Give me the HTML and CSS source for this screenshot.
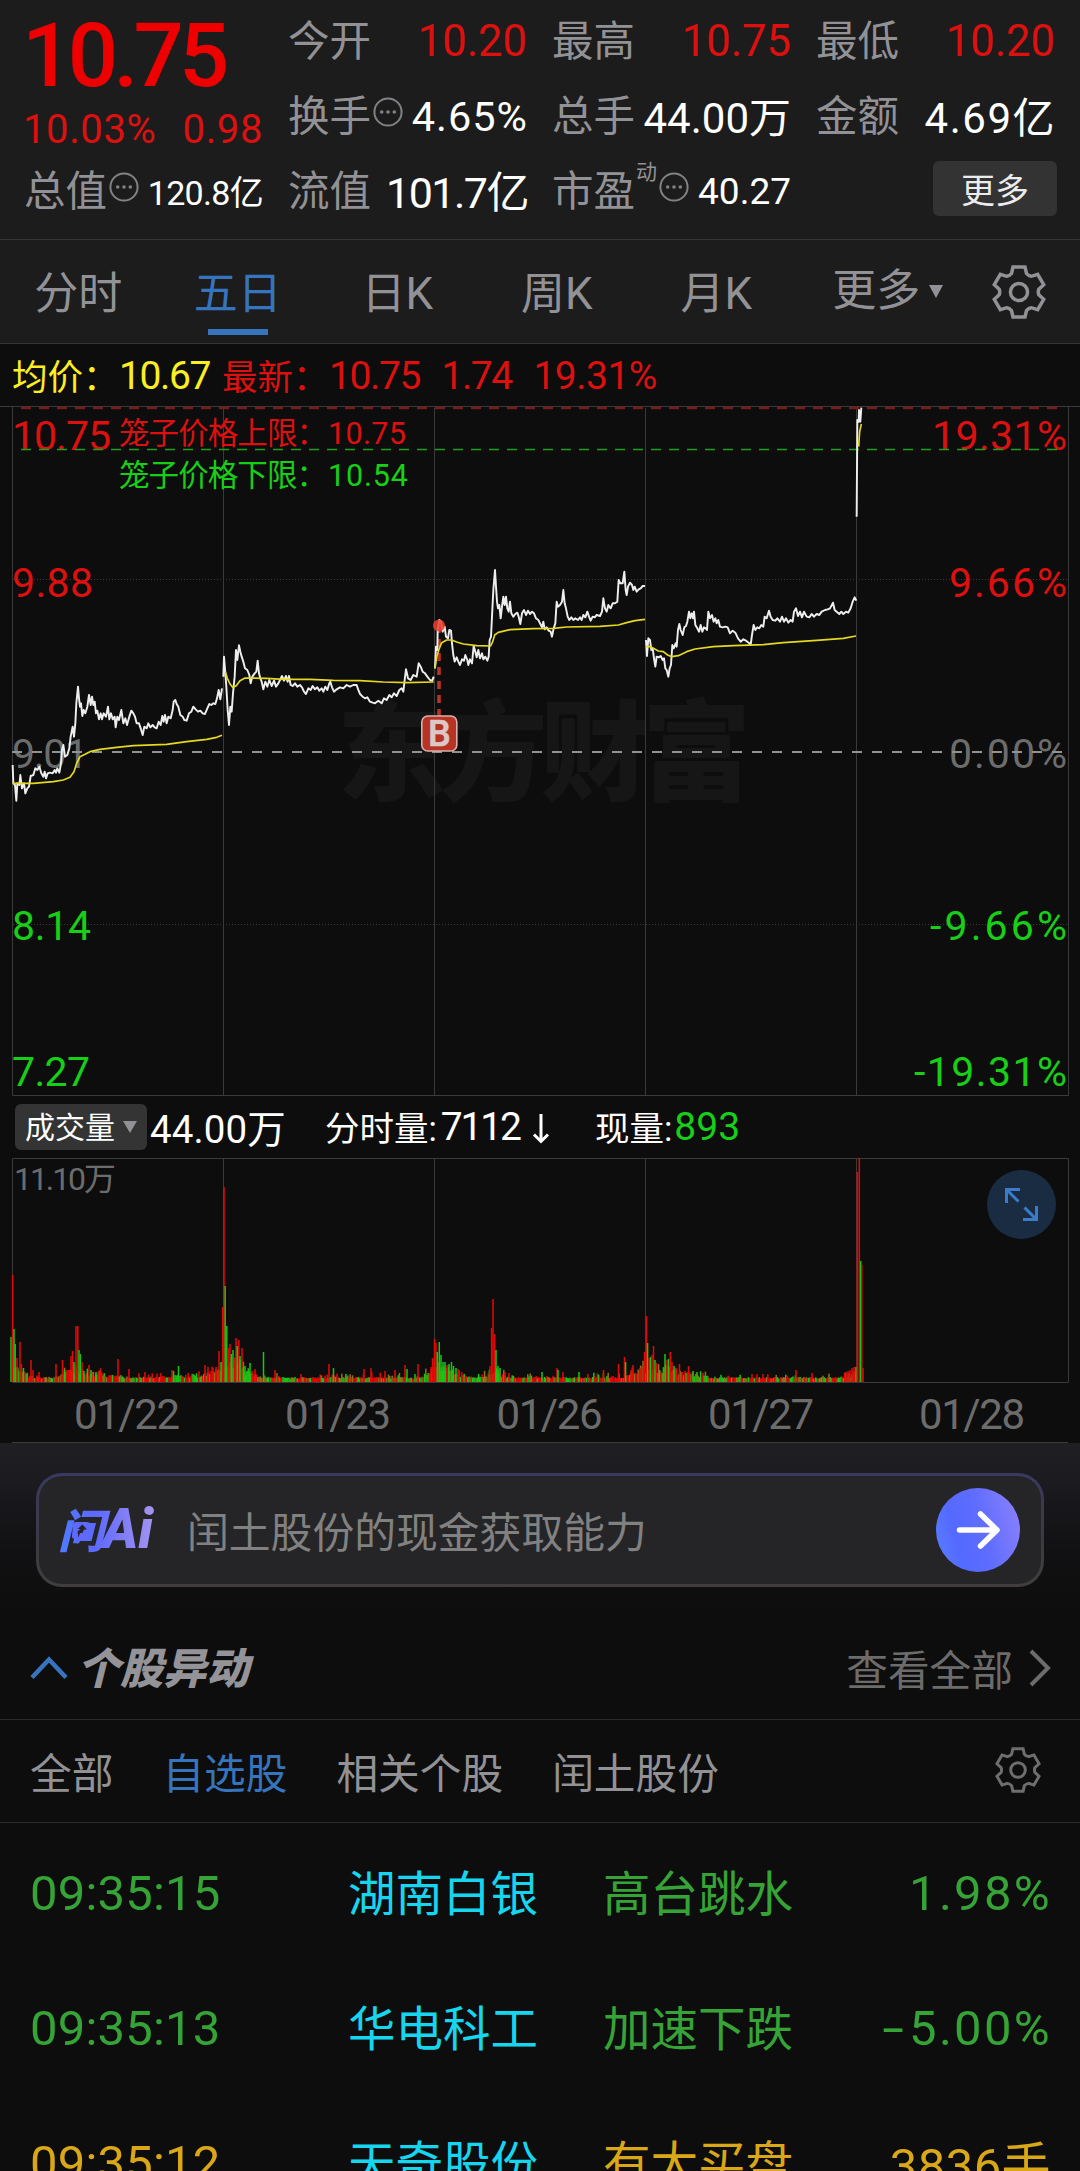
FILE: index.html
```html
<!DOCTYPE html>
<html lang="zh-CN">
<head>
<meta charset="utf-8">
<title>闰土股份</title>
<link rel="stylesheet" href="styles.css">
</head>
<body>
<svg width="0" height="0" class="defs">
  <symbol id="gear" viewBox="-27 -27 54 54">
    <path d="M-7.5-18.5-6-25H6L7.5-18.5Q9.5-16 12.3-15.7L18.7-17.7 24.7-7.3 19.8-2.8Q18.8 0 19.8 2.8L24.7 7.3 18.7 17.7 12.3 15.7Q9.5 16 7.5 18.5L6 25H-6L-7.5 18.5Q-9.5 16-12.3 15.7L-18.7 17.7-24.7 7.3-19.8 2.8Q-18.8 0-19.8-2.8L-24.7-7.3-18.7-17.7-12.3-15.7Q-9.5-16-7.5-18.5Z"/>
    <circle r="8.6"/>
  </symbol>
  <symbol id="dots" viewBox="0 0 30 30">
    <circle cx="15" cy="15" r="13.6" fill="none" stroke="currentColor" stroke-width="2"/>
    <circle cx="8.7" cy="15" r="1.8" fill="currentColor"/><circle cx="15" cy="15" r="1.8" fill="currentColor"/><circle cx="21.3" cy="15" r="1.8" fill="currentColor"/>
  </symbol>
</svg>

<header class="quote">
  <div class="lead">
    <div class="price">10.75</div>
    <div class="change"><span>10.03%</span><span>0.98</span></div>
    <div class="cell"><span class="k">总值</span><svg class="info"><use href="#dots"/></svg><span class="v s35">120.8亿</span></div>
  </div>
  <div class="cell"><span class="k">今开</span><span class="v up">10.20</span></div>
  <div class="cell"><span class="k">最高</span><span class="v up">10.75</span></div>
  <div class="cell"><span class="k">最低</span><span class="v up">10.20</span></div>
  <div class="cell"><span class="k">换手</span><svg class="info"><use href="#dots"/></svg><span class="v s41">4.65%</span></div>
  <div class="cell"><span class="k">总手</span><span class="v s42">44.00万</span></div>
  <div class="cell"><span class="k">金额</span><span class="v s42 wide">4.69亿</span></div>
  <div class="cell"><span class="k">流值</span><span class="v s43">101.7亿</span></div>
  <div class="cell"><span class="k">市盈</span><sup class="dyn">动</sup><svg class="info"><use href="#dots"/></svg><span class="v s37">40.27</span></div>
  <div class="cell end"><button class="more">更多</button></div>
</header>

<nav class="tabs">
  <span>分时</span><span class="on">五日</span><span>日K</span><span>周K</span><span>月K</span><span class="drop">更多<i></i></span>
  <svg class="gear"><use href="#gear"/></svg>
</nav>

<div class="avg"><span class="y">均价：</span><span class="y n">10.67</span><span class="r">最新：</span><span class="r n">10.75</span><span class="r n">1.74</span><span class="r n pc">19.31%</span></div>

<svg class="chart" viewBox="0 406 1080 690">
  <text class="wm" x="337" y="792" textLength="414">东方财富</text>
  <path class="grid" d="M0 406.5H1080M12.5 406V1095.5H1068.5V406M223.5 408V1095M434.5 408V1095M645.5 408V1095M856.5 408V1095"/>
  <path class="dotline" d="M13 579.5H1068M13 924.5H1068"/>
  <g class="big">
    <text class="r" x="12" y="450" textLength="99">10.75</text>
    <text class="r" x="12" y="596.5" textLength="81">9.88</text>
    <text class="g0" x="12" y="768" textLength="76">9.01</text>
    <text class="g" x="12" y="939.5" textLength="79">8.14</text>
    <text class="g" x="12" y="1085.5" textLength="78">7.27</text>
    <text class="r" x="932" y="450" textLength="135">19.31%</text>
    <text class="r" x="949" y="596.5" textLength="118">9.66%</text>
    <text class="g0" x="949" y="768" textLength="118">0.00%</text>
    <text class="g" x="930" y="939.5" textLength="137">-9.66%</text>
    <text class="g" x="914" y="1085.5" textLength="153">-19.31%</text>
  </g>
  <g class="cage">
    <text class="r" x="119" y="443.5" textLength="208">笼子价格上限：</text><text class="r" x="328" y="443.5" textLength="78">10.75</text>
    <text class="g" x="119" y="485.5" textLength="208">笼子价格下限：</text><text class="g" x="328" y="485.5" textLength="80">10.54</text>
  </g>
  <path d="M21 408H1058" stroke="#7a1b1b" stroke-width="2.6" stroke-dasharray="10 8"/>
  <path d="M21 449.5H1058" stroke="#20a020" stroke-width="1.3" stroke-dasharray="10 8"/>
  <path d="M12 752H1063" stroke="#929292" stroke-width="2" stroke-dasharray="10 10"/>
  <path d="M439 625V716" stroke="#b83226" stroke-width="3.6" stroke-dasharray="8 6"/>
  <g class="px" transform="translate(0 340) scale(.33333)">
    <polyline points="38,1275 40,1330 45,1335 49,1382 52,1330 58,1335 61,1305 66,1345 72,1330 76,1360 82,1345 87,1340 92,1308 100,1305 106,1285 112,1290 118,1280 124,1300 130,1310 134,1295 138,1315 143,1300 150,1298 158,1300 164,1290 168,1298 172,1285 178,1298 183,1270 186,1230 190,1215 195,1250 202,1245 208,1225 212,1190 218,1160 222,1190 226,1150 229,1090 234,1040 237,1075 240,1100 243,1090 247,1128 251,1110 256,1120 262,1100 267,1065 272,1095 276,1070 280,1095 284,1085 288,1120 292,1112 297,1138 302,1120 306,1138 311,1120 318,1130 324,1100 328,1138 333,1120 338,1138 344,1130 347,1162 352,1130 357,1140 364,1110 370,1150 376,1135 381,1155 388,1130 394,1112 400,1120 405,1130 410,1150 417,1150 422,1165 428,1185 433,1160 440,1165 445,1150 451,1162 458,1155 464,1162 470,1165 476,1145 482,1155 487,1128 491,1145 495,1125 500,1150 505,1130 512,1135 518,1110 521,1085 526,1080 530,1092 535,1100 541,1125 548,1130 553,1140 560,1142 567,1120 574,1115 580,1100 587,1108 594,1115 601,1112 608,1120 615,1122 622,1105 628,1092 634,1095 640,1090 646,1092 651,1075 656,1050 661,1078 666,1045"/>
    <polyline points="670,1010 672,950 676,1000 679,1040 683,1110 687,1155 691,1100 695,1115 699,1060 704,1010 708,930 712,960 717,916 721,935 725,950 730,965 735,985 742,990 748,1005 752,1030 757,1010 764,1000 769,995 773,962 777,1000 781,1015 785,1025 790,1048 796,1025 802,1040 808,1020 815,1038 822,1022 828,1040 835,1030 840,1020 846,1008 852,1022 858,1008 863,1025 867,1008 872,1035 878,1038 885,1030 892,1040 900,1035 906,1042 912,1055 918,1062 925,1045 932,1050 938,1038 945,1048 952,1042 958,1052 965,1045 970,1055 976,1040 982,1050 988,1030 991,1025 996,1042 1002,1055 1010,1048 1020,1042 1030,1045 1040,1035 1050,1040 1060,1035 1070,1035 1075,1050 1080,1062 1088,1070 1095,1075 1102,1072 1110,1085 1118,1088 1125,1090 1135,1082 1145,1090 1152,1075 1160,1080 1168,1065 1175,1072 1182,1060 1190,1068 1198,1050 1205,1045 1210,1055 1214,1020 1218,988 1224,1015 1232,1020 1240,1005 1250,1010 1256,970 1262,980 1268,995 1275,1000 1282,1010 1290,1020 1297,1022 1301,1010"/>
    <polyline class="av" points="38,1330 100,1330 160,1325 190,1320 210,1312 222,1295 230,1270 240,1250 255,1243 270,1235 300,1228 350,1222 400,1217 500,1213 560,1205 620,1198 650,1192 666,1186"/>
    <polyline class="av" points="676,995 682,1015 690,1032 698,1042 708,1038 720,1022 735,1014 800,1015 850,1018 930,1018 1000,1021 1080,1022 1150,1026 1220,1028 1301,1026"/>
  </g>
  <g class="px" transform="translate(400 540) scale(.33333)">
    <polyline points="105,385 108,320 112,330 113,270 118,240 123,245 128,275 134,260 138,290 144,295 148,270 153,272 156,310 160,345 164,365 170,352 175,365 180,375 186,358 192,362 196,345 202,360 205,375 210,358 216,370 221,318 226,335 230,352 235,330 240,355 246,340 250,358 256,350 262,362 266,350 269,300 273,290 276,230 280,150 285,90 288,140 291,185 294,205 298,195 302,235 306,200 310,170 314,195 318,170 322,205 326,215 330,185 334,220 340,230 346,222 352,218 356,230 361,252 366,220 372,210 378,225 384,212 390,222 396,215 402,220 408,235 415,240 420,250 426,262 430,245 434,268 440,262 446,272 452,275 456,290 461,265 466,250 470,185 474,200 480,195 486,185 490,150 494,190 498,205 503,230 508,240 514,232 520,240 526,235 534,240 540,232 545,240 550,225 556,232 562,215 567,230 572,242 578,230 584,232 590,225 600,228 606,215 610,175 615,205 620,215 625,195 632,205 638,190 645,190 652,185 656,120 661,130 668,130 673,95 677,150 680,165 684,140 690,128 696,135 700,150 704,140 710,155 716,148 722,145 728,138 735,138"/>
    <polyline points="738,300 741,348 745,295 750,300 754,330 758,325 762,355 766,380 770,350 776,352 782,348 788,360 792,355 796,385 800,390 805,410 809,385 813,375 817,315 821,325 827,310 830,320 834,270 838,252 842,270 848,285 853,262 858,258 862,245 867,215 871,235 875,220 879,235 882,215 886,255 892,265 897,275 902,255 907,275 912,262 917,265 921,270 925,215 930,235 936,225 941,245 946,235 950,250 955,240 960,260 968,262 976,260 983,262 990,280 998,272 1006,278 1014,295 1022,305 1030,298 1038,302 1046,308 1052,315 1056,285 1061,255 1066,270 1072,262 1078,265 1084,255 1090,260 1094,230 1100,235 1107,212 1112,230 1118,240 1126,242 1132,235 1140,245 1146,230 1152,245 1158,235 1165,248 1172,240 1178,245 1182,215 1188,205 1194,228 1200,215 1206,232 1212,215 1220,230 1228,232 1235,222 1242,230 1250,222 1258,225 1265,215 1275,210 1283,208 1290,205 1299,188 1304,210 1310,215 1318,222 1324,215 1330,222 1338,215 1345,218 1352,205 1358,185 1364,172 1369,182"/>
    <polyline class="av" points="105,385 110,350 118,325 125,308 140,300 155,300 170,306 190,312 230,317 272,318 278,305 284,285 295,277 330,269 400,266 460,265 500,261 600,259 655,255 680,248 705,242 735,238"/>
    <polyline class="av" points="738,320 750,320 760,325 775,333 790,335 803,345 815,350 835,347 860,335 885,327 940,320 1000,317 1090,314 1150,308 1250,301 1330,295 1368,288"/>
  </g>
  <g class="px" transform="translate(620 340) scale(.33333)">
    <polyline points="710,530 712,240 716,245 717,210 721,245 724,203"/>
    <polyline class="av" points="716,320 719,275 724,252"/>
  </g>
  <circle cx="439" cy="625.5" r="6" fill="#ef4030" opacity=".85"/>
  <rect x="421.8" y="716" width="35" height="35" rx="6" fill="#b73425" stroke="#d8b0aa" stroke-width="1.6"/>
  <text class="buy" x="439.3" y="745.5" text-anchor="middle">B</text>
</svg>

<div class="volbar"><span class="pick">成交量<i></i></span><span class="n">44.00万</span><span class="m1">分时量:<b class="tight">7112</b><svg class="dn" viewBox="0 0 20 34"><path d="M10 3V30M3 23.500 10 30.500 17 23.500"/></svg></span><span class="m2">现量:<b class="g">893</b></span></div>

<svg class="vol" viewBox="0 1158 1080 285">
  <path class="grid" d="M12.500 1382.500V1158.500H1068.500V1382.500ZM223.500 1158V1382M434.500 1158V1382M645.500 1158V1382M856.500 1158V1382M12 1442.500H1068"/>
  <g id="bars"></g>
  <text class="max" x="14" y="1190" textLength="102">11.10万</text>
  <g class="date">
    <text x="74" y="1428.500" textLength="106">01/22</text><text x="285" y="1428.500" textLength="106">01/23</text><text x="496.500" y="1428.500" textLength="106">01/26</text><text x="708" y="1428.500" textLength="106">01/27</text><text x="919" y="1428.500" textLength="106">01/28</text>
  </g>
  <circle cx="1021.500" cy="1204.500" r="34.500" fill="#192c42"/>
  <path d="M1006.500 1203V1189.500H1020M1006.500 1189.500 1018.500 1201.500M1036.500 1206V1219.500H1023M1036.500 1219.500 1024.500 1207.500" fill="none" stroke="#3a7cca" stroke-width="3"/>
</svg>

<section class="ask">
  <div class="askbox">
    <span class="logo">问<em>Ai</em><svg class="bubble" viewBox="0 0 20 24"><path d="M5 1H16Q19.500 1 19 4.500L17.500 15Q17 18 14 18H12L6 23V18H4Q.5 18 1 14.500L2 4Q2.500 1 5 1Z" fill="#5d69ff"/><path d="M11.500 3.500 16 8.500H13L11.500 12H9L7.500 16.500 6.500 10.500 9.500 8H6.500Z" fill="#252527"/></svg></span>
    <span class="q">闰土股份的现金获取能力</span>
    <span class="go"><svg viewBox="0 0 84 84"><path d="M23.500 42H60M44.500 26 61 42 44.500 58"/></svg></span>
  </div>
</section>

<section class="head">
  <svg class="up-ic" viewBox="0 0 40 26"><path d="M3 22.500 20 4.500 37 22.500"/></svg>
  <h2>个股异动</h2>
  <span class="all">查看全部</span>
  <svg class="rt-ic" viewBox="0 0 22 38"><path d="M2 2 19 19 2 36"/></svg>
</section>

<nav class="sub"><span>全部</span><span class="on">自选股</span><span>相关个股</span><span>闰土股份</span><svg class="gear sm"><use href="#gear"/></svg></nav>

<ul class="list">
  <li class="dn-c"><span class="t">09:35:15</span><span class="nm">湖南白银</span><span class="ev">高台跳水</span><span class="val">1.98%</span></li>
  <li class="dn-c"><span class="t">09:35:13</span><span class="nm">华电科工</span><span class="ev">加速下跌</span><span class="val"><i class="minus">-</i>5.00%</span></li>
  <li class="gold"><span class="t">09:35:12</span><span class="nm">天奇股份</span><span class="ev">有大买盘</span><span class="val lots">3836手</span></li>
</ul>
<script src="volume.js"></script>
</body>
</html>
```
FILE: volume.js
```js
// Named spikes: x, height, colour
const peaks = [[11,45,'g'],[12.6,107,'r'],[14,53,'g'],[15.2,38,'g'],[17,24,'r'],[20,40,'r'],[21.5,18,'r'],[23.5,14,'g'],[31,22,'r'],[33,12,'r'],[39,10,'r'],[56,18,'r'],[62.5,22,'r'],[64.5,12,'g'],[71,26,'r'],[72.5,31,'r'],[74,20,'g'],[76,56,'r'],[77.8,56,'r'],[79,32,'g'],[80.3,28,'g'],[82,20,'r'],[84,11,'g'],[89,17,'r'],[91,12,'g'],[96,10,'g'],[99,11,'r'],[118,23,'r'],[129,13,'r'],[145,10,'r'],[172,12,'r'],[173.5,11,'g'],[178.5,16,'g'],[205,17,'r'],[208,15,'r'],[213,14,'r'],[216,15,'r'],[219,31,'r'],[221,20,'g'],[222.6,75,'r'],[224,195,'r'],[225.2,96,'g'],[226.8,56,'g'],[228.2,34,'r'],[230,38,'r'],[231.3,28,'g'],[233,32,'g'],[234.5,24,'r'],[236,44,'r'],[237.2,36,'g'],[238.8,42,'r'],[240,26,'g'],[242,34,'r'],[243.5,15,'g'],[245,16,'g'],[247,11,'g'],[250,19,'g'],[252,11,'r'],[255,13,'r'],[263.5,30,'g'],[275,12,'r'],[329,18,'r'],[333.5,14,'g'],[346,8,'g'],[364,13,'r'],[371,14,'r'],[385,11,'r'],[395,12,'r'],[405,17,'r'],[407,13,'g'],[418,18,'r'],[431,15,'r'],[432.5,24,'r'],[434.5,43,'r'],[436,39,'r'],[437.3,30,'g'],[439.3,40,'g'],[441,27,'g'],[443,20,'g'],[445,20,'g'],[447,17,'r'],[449,18,'g'],[451.5,20,'g'],[453.5,16,'g'],[456,14,'g'],[458,13,'r'],[490,16,'r'],[491.6,54,'r'],[493,83,'r'],[494.6,48,'r'],[496,32,'g'],[498,16,'g'],[500,14,'g'],[505,10,'r'],[509,9,'r'],[542,10,'g'],[557,14,'r'],[558,12,'g'],[563,10,'r'],[579,10,'g'],[603.5,12,'r'],[618.5,18,'r'],[624.5,25,'r'],[625.6,20,'g'],[631,12,'r'],[633,17,'r'],[640,14,'r'],[641.5,13,'r'],[644.5,30,'r'],[646.4,66,'r'],[647.6,39,'g'],[649,24,'r'],[650.5,25,'g'],[652,27,'r'],[653.5,36,'r'],[655,22,'g'],[656.5,19,'r'],[665,28,'g'],[667,22,'r'],[668.5,23,'g'],[670.3,30,'r'],[672,20,'r'],[674,16,'g'],[676,13,'r'],[679.5,18,'r'],[682,10,'r'],[688.5,16,'r'],[693,11,'g'],[697,10,'g'],[752,8,'r'],[763,8,'r'],[796,12,'r'],[812,9,'r'],[846,10,'r'],[848,11,'r'],[850,12,'r'],[852,14,'r'],[854,15,'r'],[856,15,'g'],[857.4,210,'r'],[859.3,224,'r'],[860.7,121,'g'],[861.8,117,'r'],[863,14,'r']];
// Stretches of heavier trading: centre, spread, extra height
const swells = [[14,12,14],[76,14,10],[95,18,6],[190,28,3],[224,14,16],[240,12,14],[436,10,14],[452,12,7],[494,8,10],[646,16,14],[668,14,10],[690,14,5],[855,8,7]];
let seed = 20;
const rnd = () => (seed = (seed * 16807) % 2147483647) / 2147483647;
const colours = {r: '#e60808', g: '#16c814', m: '#93701a'};
const NS = 'http://www.w3.org/2000/svg';
const bars = document.getElementById('bars');
function bar(x, h, c) {
  const r = document.createElementNS(NS, 'rect');
  r.setAttribute('x', (x - 0.75).toFixed(2));
  r.setAttribute('y', (1382 - h).toFixed(2));
  r.setAttribute('width', 1.5);
  r.setAttribute('height', h.toFixed(2));
  r.setAttribute('fill', colours[c]);
  bars.appendChild(r);
}
for (let x = 13; x < 857; x += 1.2) {
  let lift = 2.5;
  for (const [c, s, h] of swells) lift += h * Math.exp(-Math.pow((x - c) / s, 2));
  const k = rnd();
  bar(x, 2.6 + lift * (0.3 + 0.7 * rnd()) + (rnd() > 0.8 ? 5 * rnd() : 0), k < 0.47 ? 'r' : k < 0.75 ? 'g' : 'm');
}
for (const [x, h, c] of peaks) bar(x, h, c);
```
FILE: styles.css
```css
* { box-sizing: border-box; }
body {
  margin: 0;
  width: 1080px;
  height: 2171px;
  overflow: hidden;
  background: #0d0d0d;
  color: #929296;
  font-family: Roboto, "Noto Sans CJK SC", sans-serif;
}
.defs { position: absolute; }
.r { color: #dd1010; fill: #dd1010; }
.g { color: #18cf18; fill: #18cf18; }
.y { color: #fbee22; }

.quote {
  height: 240px;
  padding: 3px 25px 0;
  background: #1c1c1c;
  border-bottom: 1px solid #353535;
  display: grid;
  grid-template-columns: repeat(4, 238px);
  grid-template-rows: repeat(3, 75px);
  column-gap: 26px;
}
.lead { grid-row: 1 / 4; display: flex; flex-direction: column; }
.price { height: 90px; line-height: 106px; font-size: 88.5px; font-weight: 500; color: #ee0000; letter-spacing: -4.6px; margin-left: -3px; }
.change { height: 60px; line-height: 73px; display: flex; justify-content: space-between; font-size: 40px; letter-spacing: .6px; color: #dd1010; margin-left: -2px; }
.cell { height: 75px; display: flex; align-items: center; white-space: nowrap; }
.k { font-size: 41.5px; margin: -5px 0 0 -1px; }
.v { margin-left: auto; margin-top: -1px; font-size: 43.5px; color: #fff; }
.up { color: #dd1010; margin-top: 1px; }
.s35 { font-size: 34px; letter-spacing: -.7px; }
.s37 { font-size: 37px; margin-top: 2px; }
.s41 { font-size: 41.5px; letter-spacing: 1px; margin-top: 1px; margin-right: -1px; }
.s42 { font-size: 42px; margin-top: -3px; }
.s43 { font-size: 43px; letter-spacing: -1.5px; margin-top: -3px; margin-right: -1px; }
.wide { letter-spacing: 1.5px; margin-right: -1px; }
.info { width: 30px; height: 30px; margin-left: 2px; margin-top: -7px; color: #828286; flex: none; }
.dyn { font-size: 21px; line-height: 24px; margin: -38px 0 0 1px; }
.dyn + .info { margin-left: 2px; }
.end { justify-content: flex-end; }
.more {
  width: 124px; height: 55px; margin: 0 -2px 4px 0; padding: 0;
  border: 0; border-radius: 6px; background: #333; color: #ececec;
  font: 34px/50px "Noto Sans CJK SC", sans-serif;
}

.tabs {
  height: 104px;
  background: #1c1c1c;
  border-bottom: 1px solid #353535;
  display: grid;
  grid-template-columns: repeat(6, 159.5px) 1fr;
  align-items: center;
  justify-items: center;
  font-size: 44px;
}
.tabs span { height: 103px; line-height: 109px; position: relative; left: -1.5px; }
.on { color: #3674bd; }
.tabs .on { background: linear-gradient(#3674bd, #3674bd) center 89px / 60px 6px no-repeat; }
.drop { display: flex; align-items: center; margin-right: -24px; }
.drop i { margin: 0 0 1px 9px; border: 7.5px solid transparent; border-top: 13px solid #929296; border-bottom: 0; }
.gear { width: 54px; height: 54px; margin-top: 0; fill: none; stroke: #929296; stroke-width: 3.5; }

.avg { height: 62px; display: flex; align-items: center; padding-left: 12px; font-size: 35.5px; white-space: nowrap; }
.avg .n { font-size: 39px; margin-right: 21.5px; margin-top: 2px; letter-spacing: -1.4px; }
.avg .y.n { margin-right: 12px; }
.avg .pc { letter-spacing: -.5px; }
.avg span:not(.n) { width: 107px; margin-top: -2px; }

.chart, .vol { display: block; width: 1080px; }
.chart { height: 690px; fill: none; }
.vol { height: 285px; }
.grid { stroke: #3a3a3a; stroke-width: 1; fill: none; }
.dotline { stroke: #3a3a3a; stroke-width: 1; stroke-dasharray: 1 2; }
.wm { font-size: 109px; font-weight: 900; fill: #161616; }
.big { font-size: 41px; }
.g0 { fill: #6c6c6c; }
.cage { font-size: 30.5px; }
.px { stroke: #eee; stroke-width: 5.8; stroke-linejoin: round; }
.av { stroke: #e5d820; stroke-width: 5; }
.buy { font: 500 36px Roboto, sans-serif; fill: #dcc9c7; stroke: #dcc9c7; stroke-width: .6; }
.max { font-size: 32px; fill: #6c6c6c; }
.date { font-size: 42px; fill: #6c6c6c; }

.volbar { height: 62px; display: flex; align-items: center; padding-left: 15px; color: #fff; font-size: 34.5px; white-space: nowrap; }
.volbar b { font-weight: 400; font-size: 39px; margin-top: 2px; margin-left: 2px; }
.volbar .tight { letter-spacing: -2.2px; margin-left: 4px; }
.volbar .n { margin: -2px 0 0 3px; width: 175px; font-size: 38.5px; letter-spacing: .1px; }
.pick { width: 132px; height: 46px; margin-bottom: 1px; border-radius: 6px; background: #343434; display: flex; align-items: center; padding: 0 0 3px 10px; font-size: 30px; }
.pick i { margin: 3px 0 0 8px; border: 7.5px solid transparent; border-top: 12px solid #929296; border-bottom: 0; }
.m1, .m2 { display: flex; align-items: center; height: 62px; margin-top: -2px; }
.m1 { width: 270px; }
.dn { width: 20px; height: 34px; margin: 3px 0 0 11px; fill: none; stroke: #fff; stroke-width: 3; }

.ask { height: 177px; padding: 30px 36px 0; background: linear-gradient(#1f1f24, #1b1b20 20%, #111113 62%, #0d0d0d); }
.askbox {
  height: 114px; padding: 0 21px; border: 3px solid transparent; border-radius: 26px;
  background: linear-gradient(#252527, #252527) padding-box, linear-gradient(#3a3962, #3c3a42 60%, #413e3d) border-box;
  display: flex; align-items: center;
}
.logo {
  position: relative; width: 104px; margin: 0 25px 0 -2px; white-space: nowrap; font-size: 46px; line-height: 58px; font-weight: 900; font-style: italic;
  background: linear-gradient(90deg, #4f7dff, #5c68ff 35%, #a896ee 95%); background-clip: text; color: transparent;
}
.logo em { font-size: 55px; letter-spacing: 0; margin-left: -2px; }
.bubble { position: absolute; left: 13px; top: 21px; width: 20px; height: 24px; }
.q { font-size: 41.8px; color: #818181; margin-top: -1px; }
.go { width: 84px; height: 84px; margin-left: auto; border-radius: 50%; background: linear-gradient(75deg, #5a80ff, #5469ff 28%, #5f6dff 55%, #8f83fc); }
.go svg { display: block; fill: none; stroke: #fff; stroke-width: 5.5; stroke-linecap: round; stroke-linejoin: round; }

.head { height: 100px; padding: 0 30px; border-bottom: 1px solid #2a2a2a; display: flex; align-items: center; }
.up-ic { width: 40px; height: 26px; margin-left: -1px; margin-right: 8px; margin-top: -3px; fill: none; stroke: #3674bd; stroke-width: 4.5; }
h2 { margin: -10px 0 0; font: italic 900 43px/60px "Noto Sans CJK SC", sans-serif; color: #939398; }
.all { margin: -3px 0 0 auto; font-size: 41.7px; color: #6c6c6c; }
.rt-ic { width: 22px; height: 38px; margin: -4px -1px 0 16px; fill: none; stroke: #6c6c6c; stroke-width: 4; }
.sub { height: 103px; padding: 0 40px 0 30px; border-bottom: 1px solid #2a2a2a; display: flex; align-items: center; gap: 49px; font-size: 41.7px; }
.sub span { margin-top: -1px; }
.sub .gear { width: 46px; height: 46px; margin: -3px -1px 0 auto; stroke: #6e6e70; }
.list { margin: 0; padding: 3px 30px 0 30px; list-style: none; }
.list li { height: 135px; display: grid; grid-template-columns: 318px 255px 190px 1fr; align-items: center; font-size: 47.5px; white-space: nowrap; }
.t, .val { font-size: 49px; }
.t { letter-spacing: .2px; }
.nm, .ev { margin-top: -6px; }
.val { text-align: right; letter-spacing: 2.3px; margin-right: -2px; }
.lots { letter-spacing: .4px; margin-top: -4px; margin-right: -1px; }
.minus { display: inline-block; font-style: normal; transform: scaleX(1.6); margin-right: 6px; }
.nm { color: #16d6ef; }
.dn-c { color: #36a336; }
.gold { color: #d9a717; }
```
